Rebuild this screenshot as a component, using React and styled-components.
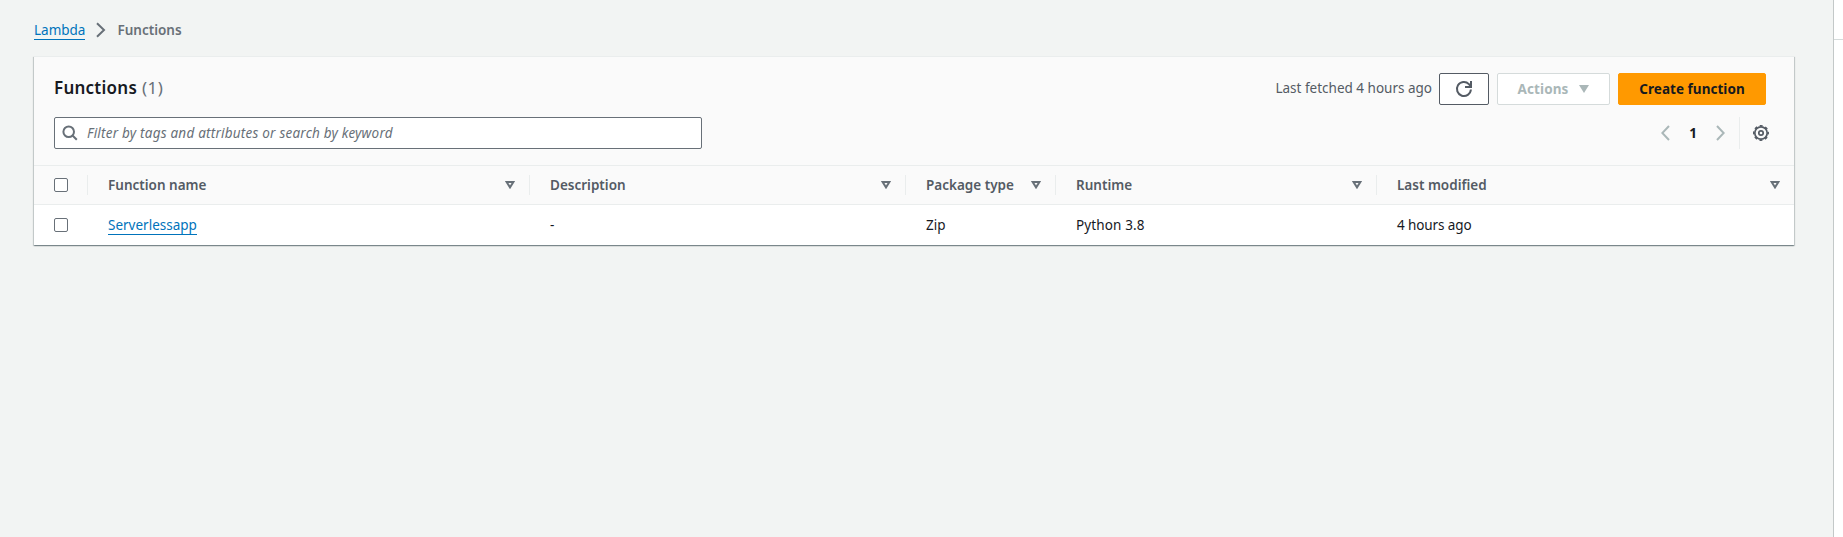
import React from "react";
import styled, { createGlobalStyle } from "styled-components";

const Global = createGlobalStyle`
  * { box-sizing: border-box; }
  body { margin: 0; background: #f2f3f3; overflow: hidden; }
  button, input { font: inherit; letter-spacing: inherit; }
`;

const Page = styled.div`
  display: flex;
  height: 537px;
  width: 1843px;
  font: 13.5px/20px "Noto Sans", sans-serif;
  color: #16191f;
`;
const Main = styled.main`
  width: 1834px;
  padding: 20px 39px 0 34px;
  border-right: 1px solid #c3c8c8;
  background: #f2f4f3;
`;
const SidePanel = styled.aside`
  flex: 1;
  background: #fff;
`;
const SideHeader = styled.div`
  height: 40px;
  border-bottom: 1px solid #d5dbdb;
`;
const Breadcrumbs = styled.nav`
  display: flex;
  align-items: center;
  height: 20px;
  margin-bottom: 16px;
`;
const Text = styled.span`
  white-space: nowrap;
  letter-spacing: ${(p) => p.$ls || 0}px;
`;
const Link = styled.a`
  color: #0073bb;
  border-bottom: 1px solid #0073bb;
  line-height: 18px;
  height: 19px;
  display: inline-block;
`;
const Crumb = styled(Text)`
  color: #687078;
  font-weight: 600;
`;
const CrumbIcon = styled.svg`
  width: 11px;
  height: 16px;
  margin: 0 11px 0 10px;
`;
const Panel = styled.section`
  height: 189px;
  background: #fff;
  border-top: 1px solid #eaeded;
  box-shadow: 0 1px 1px 0 rgba(0, 28, 36, 0.3), 1px 1px 1px 0 rgba(0, 28, 36, 0.15),
    -1px 1px 1px 0 rgba(0, 28, 36, 0.15);
`;
const PanelHead = styled.header`
  height: 109px;
  padding: 16px 28px 0 20px;
  background: #fafafa;
  border-bottom: 1px solid #eaeded;
`;
const Bar = styled.div`
  display: flex;
  align-items: center;
  justify-content: space-between;
  height: 32px;
  margin-bottom: 12px;
`;
const Title = styled.h2`
  margin: 0;
  padding-bottom: 3px;
  font-size: 17px;
  line-height: 22px;
  font-weight: 600;
  letter-spacing: 0.25px;
`;
const Count = styled.span`
  margin-left: 5px;
  color: #687078;
  font-weight: 400;
  letter-spacing: 0.4px;
`;
const Actions = styled.div`
  display: flex;
  align-items: center;
  gap: 8px;
`;
const Fetched = styled(Text)`
  color: #545b64;
  padding-bottom: 2px;
  margin-right: -1px;
`;
const Button = styled.button`
  display: flex;
  align-items: center;
  justify-content: center;
  gap: 11px;
  width: ${(p) => p.$w}px;
  height: 32px;
  padding: 0;
  border: 1px solid ${(p) => p.$border};
  border-radius: 2px;
  background: ${(p) => p.$bg || "#fff"};
  color: ${(p) => p.$color};
  font-weight: 700;
`;
const Search = styled.label`
  display: flex;
  align-items: center;
  width: 648px;
  height: 32px;
  padding-left: 7px;
  gap: 9px;
  background: #fff;
  border: 1px solid #687078;
  border-radius: 2px;
`;
const SearchInput = styled.input`
  flex: 1;
  border: 0;
  padding: 0;
  outline: 0;
  background: none;
  letter-spacing: 0.22px;
  &::placeholder {
    color: #687078;
    font-style: italic;
    opacity: 1;
  }
`;
const Pager = styled.div`
  display: flex;
  align-items: center;
  height: 32px;
  margin-right: -3px;
`;
const PageNumber = styled.b`
  width: 46px;
  text-align: center;
`;
const Settings = styled.div`
  display: flex;
  align-items: center;
  height: 32px;
  margin-left: 14px;
  padding-left: 13px;
  border-left: 1px solid #eaeded;
`;
const Row = styled.div`
  display: grid;
  grid-template-columns: 54px 442px 376px 150px 321px 1fr;
  align-items: center;
  height: ${(p) => (p.$head ? 39 : 40)}px;
  padding-bottom: ${(p) => (p.$head ? 0 : 1)}px;
  background: ${(p) => (p.$head ? "#fafafa" : "#fff")};
  border-bottom: ${(p) => (p.$head ? "1px solid #eaeded" : "0")};
`;
const Cell = styled.div`
  display: flex;
  align-items: center;
  height: 20px;
  padding-left: 20px;
`;
const HeadCell = styled(Cell)`
  justify-content: space-between;
  padding-right: 14px;
  border-right: ${(p) => (p.$last ? "0" : "1px solid #eaeded")};
  color: #545b64;
  font-weight: 600;
`;
const RowLink = styled(Link)`
  line-height: 20px;
  height: 20px;
`;
const Check = styled.input.attrs({ type: "checkbox" })`
  appearance: none;
  width: 14px;
  height: 14px;
  margin: 0;
  border: 1px solid #687078;
  border-radius: 2px;
  background: #fff;
`;

const Sort = () => (
  <svg width="10" height="8" viewBox="0 0 10 8">
    <path d="M1.6 1h6.8L5 6.4z" fill="none" stroke="#687078" strokeWidth="2" />
  </svg>
);
const Chevron = ({ left }) => (
  <svg width="9" height="16" viewBox="0 0 9 16">
    <path d={left ? "M8 1L1.3 8L8 15" : "M1 1l6.7 7L1 15"} fill="none" stroke="#aab7b8" strokeWidth="2" />
  </svg>
);
const Gear = () => (
  <svg width="16" height="16" viewBox="0 0 16 16" fill="none" stroke="#545b64">
    <circle cx="8" cy="8" r="6.2" strokeWidth="1.7" />
    <circle cx="8" cy="8" r="7.3" strokeWidth="1.4" strokeDasharray="3 2.73" strokeDashoffset="1.5" />
    <circle cx="8" cy="8" r="2.2" strokeWidth="1.7" />
  </svg>
);

const columns = ["Function name", "Description", "Package type", "Runtime", "Last modified"];

export default function App() {
  return (
    <Page>
      <Global />
      <Main>
        <Breadcrumbs>
          <Link>Lambda</Link>
          <CrumbIcon viewBox="0 0 11 16">
            <path d="M2 1.2L9 8l-7 6.8" fill="none" stroke="#687078" strokeWidth="2" />
          </CrumbIcon>
          <Crumb>Functions</Crumb>
        </Breadcrumbs>
        <Panel>
          <PanelHead>
            <Bar>
              <Title>
                Functions<Count>(1)</Count>
              </Title>
              <Actions>
                <Fetched>Last fetched 4 hours ago</Fetched>
                <Button $w={50} $border="#545b64" aria-label="Refresh">
                  <svg width="18" height="18" viewBox="0 0 18 18" fill="none" stroke="#545b64" strokeWidth="2">
                    <path d="M15.9 9.5a7 7 0 1 1-2-5.4L15.6 6" />
                    <path d="M16 1v6h-6" />
                  </svg>
                </Button>
                <Button $w={113} $border="#d5dbdb" $color="#aab7b8">
                  <Text $ls={0.1}>Actions</Text>
                  <svg width="10" height="8" viewBox="0 0 10 8">
                    <path d="M0 0h10L5 8z" fill="#aab7b8" />
                  </svg>
                </Button>
                <Button $w={148} $border="#ff9900" $bg="#ff9900" $color="#16191f">
                  <Text $ls={0.04}>Create function</Text>
                </Button>
              </Actions>
            </Bar>
            <Bar>
              <Search>
                <svg width="16" height="16" viewBox="0 0 16 16" fill="none" stroke="#687078" strokeWidth="2">
                  <circle cx="6.7" cy="6.7" r="5.3" />
                  <path d="M10.5 10.5l4.3 4.3" />
                </svg>
                <SearchInput placeholder="Filter by tags and attributes or search by keyword" />
              </Search>
              <Pager>
                <Chevron left />
                <PageNumber>1</PageNumber>
                <Chevron />
                <Settings>
                  <Gear />
                </Settings>
              </Pager>
            </Bar>
          </PanelHead>
          <Row $head>
            <HeadCell>
              <Check />
            </HeadCell>
            {columns.map((label, i) => (
              <HeadCell key={label} $last={i === columns.length - 1}>
                <Text>{label}</Text>
                <Sort />
              </HeadCell>
            ))}
          </Row>
          <Row>
            <Cell>
              <Check />
            </Cell>
            <Cell>
              <RowLink>Serverlessapp</RowLink>
            </Cell>
            <Cell>-</Cell>
            <Cell>Zip</Cell>
            <Cell>
              <Text $ls={0.12}>Python 3.8</Text>
            </Cell>
            <Cell>
              <Text $ls={-0.1}>4 hours ago</Text>
            </Cell>
          </Row>
        </Panel>
      </Main>
      <SidePanel>
        <SideHeader />
      </SidePanel>
    </Page>
  );
}
